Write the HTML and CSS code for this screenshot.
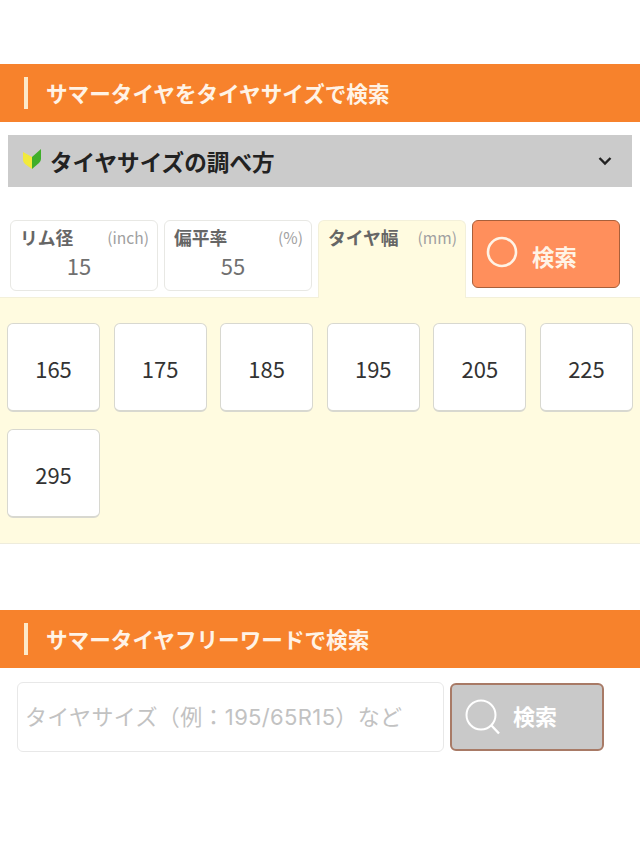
FILE: index.html
```html
<!DOCTYPE html>
<html lang="ja">
<head>
    <meta charset="UTF-8">
    <meta name="viewport" content="width=device-width, initial-scale=1.0">
    <title>サマータイヤ検索</title>
    <link rel="stylesheet" href="styles.css">
</head>
<body>
    <section class="size-search">
        <h2 class="heading"><span class="heading-text">サマータイヤをタイヤサイズで検索</span></h2>
        <div class="guide">
            <svg class="guide-mark" width="20" height="22" viewBox="0 0 20 22">
                <path d="M1 4 L10 9 V21 L3 16 Q1 14 1 12 Z" fill="#f2ea3c"/>
                <path d="M19 1 L10 9 V21 L17 15 Q19 13 19 11 Z" fill="#3fae2a"/>
            </svg>
            <span class="guide-text">タイヤサイズの調べ方</span>
            <svg class="guide-arrow" width="14" height="10" viewBox="0 0 14 10">
                <path d="M1.5 2 L7 7.5 L12.5 2" fill="none" stroke="#222" stroke-width="2.4"/>
            </svg>
        </div>
        <div class="tabs">
            <div class="tab">
                <div class="tab-head"><span class="tab-label">リム径</span><span class="tab-unit">(inch)</span></div>
                <div class="tab-value">15</div>
            </div>
            <div class="tab">
                <div class="tab-head"><span class="tab-label">偏平率</span><span class="tab-unit">(%)</span></div>
                <div class="tab-value">55</div>
            </div>
            <div class="tab tab-active">
                <div class="tab-head"><span class="tab-label">タイヤ幅</span><span class="tab-unit">(mm)</span></div>
            </div>
            <button class="search-btn">
                <svg class="search-ring" width="32" height="32" viewBox="0 0 32 32">
                    <circle cx="16" cy="16" r="14" fill="none" stroke="#fff3e6" stroke-width="2.6"/>
                </svg>
                <span>検索</span>
            </button>
        </div>
        <div class="panel">
            <div class="size-tile">165</div>
            <div class="size-tile">175</div>
            <div class="size-tile">185</div>
            <div class="size-tile">195</div>
            <div class="size-tile">205</div>
            <div class="size-tile">225</div>
            <div class="size-tile">295</div>
        </div>
    </section>

    <section class="word-search">
        <h2 class="heading"><span class="heading-text">サマータイヤフリーワードで検索</span></h2>
        <div class="word-row">
            <input class="word-input" type="text" placeholder="タイヤサイズ（例：195/65R15）など">
            <button class="word-btn">
                <svg width="38" height="38" viewBox="0 0 38 38">
                    <circle cx="17" cy="17" r="14.5" fill="none" stroke="#fff" stroke-width="2"/>
                    <path d="M27 27 L35 35.5" stroke="#fff" stroke-width="2.4"/>
                </svg>
                <span>検索</span>
            </button>
        </div>
    </section>
</body>
</html>
```

FILE: styles.css
```css
* {
    box-sizing: border-box;
}

body {
    margin: 0;
    padding-top: 64px;
    background-color: #fff;
    color: #333;
    font-family: "Noto Sans CJK JP", "Noto Sans", sans-serif;
}

.heading {
    display: flex;
    align-items: center;
    height: 58px;
    margin: 0;
    padding-left: 24px;
    background-color: #f7822c;
    color: #fff3e6;
    font-size: 21.6px;
    font-weight: 700;
}

.heading-text {
    padding-left: 18px;
    line-height: 32px;
    border-left: 4px solid #fde9c8;
}

.guide {
    display: flex;
    align-items: center;
    height: 52px;
    margin: 13px 8px 0;
    padding: 0 20px 0 14px;
    background-color: #cbcbcb;
}

.guide-mark {
    margin-top: -4px;
}

.guide-text {
    flex: 1;
    margin-left: 8px;
    color: #222;
    font-size: 22.6px;
    font-weight: 700;
}

.tabs {
    display: flex;
    align-items: flex-start;
    gap: 6px;
    height: 77px;
    margin-top: 33px;
    padding-left: 10px;
}

.tab {
    width: 148px;
    height: 71px;
    padding: 5px 9px 0;
    background-color: #fff;
    border: 1px solid #e8e8e4;
    border-radius: 6px;
}

.tab-active {
    position: relative;
    z-index: 1;
    height: 78px;
    background-color: #fffbe0;
    border-color: #f3f0da;
    border-bottom: none;
    border-radius: 6px 6px 0 0;
}

.tab-head {
    display: flex;
    justify-content: space-between;
    align-items: center;
    height: 22px;
}

.tab-label {
    color: #666;
    font-size: 17.8px;
    font-weight: 700;
}

.tab-unit {
    margin-right: -1px;
    color: #a0a0a0;
    font-size: 15.6px;
}

.tab-value {
    margin-top: 2px;
    padding-right: 10px;
    color: #707070;
    font-size: 22px;
    line-height: 30px;
    text-align: center;
}

.search-btn {
    display: flex;
    align-items: center;
    width: 148px;
    height: 68px;
    padding: 0 0 0 13px;
    background-color: #ff8f5c;
    border: 1px solid #a85f3a;
    border-radius: 6px;
    color: #fff3e6;
    font-family: inherit;
    font-size: 22.4px;
    font-weight: 700;
}

.search-ring {
    margin-bottom: 4px;
}

.search-btn span {
    margin: 4px 0 0 14px;
}

.panel {
    display: flex;
    flex-wrap: wrap;
    align-content: flex-start;
    gap: 17px 13.6px;
    height: 247px;
    padding: 25px 0 0 7px;
    background-color: #fffbe0;
    border-top: 1px solid #f3f0da;
    border-bottom: 1px solid #eeecdc;
}

.size-tile {
    display: flex;
    justify-content: center;
    align-items: center;
    width: 93px;
    height: 89px;
    padding-top: 2px;
    background-color: #fff;
    border: 1px solid #d8d8d0;
    border-bottom-width: 2px;
    border-radius: 6px;
    color: #333;
    font-size: 22px;
}

.word-search {
    margin-top: 66px;
}

.word-row {
    display: flex;
    align-items: flex-start;
    gap: 6px;
    padding: 14px 0 0 17px;
}

.word-input {
    width: 427px;
    height: 70px;
    padding: 0 7px;
    background-color: #fff;
    border: 1px solid #e8e8e8;
    border-radius: 6px;
    font-family: Inter, "Noto Sans CJK JP", sans-serif;
    font-size: 22px;
    letter-spacing: 0.35px;
}

.word-input::placeholder {
    color: #c2c2c2;
    opacity: 1;
}

.word-btn {
    display: flex;
    align-items: center;
    gap: 11px;
    width: 154px;
    height: 68px;
    margin-top: 1px;
    padding: 0 0 0 12px;
    background-color: #c9c9c9;
    border: 2px solid #a87a66;
    border-radius: 6px;
    color: #fff;
    font-family: inherit;
    font-size: 22px;
    font-weight: 700;
}

.word-btn span {
    margin-bottom: 4px;
}
```
